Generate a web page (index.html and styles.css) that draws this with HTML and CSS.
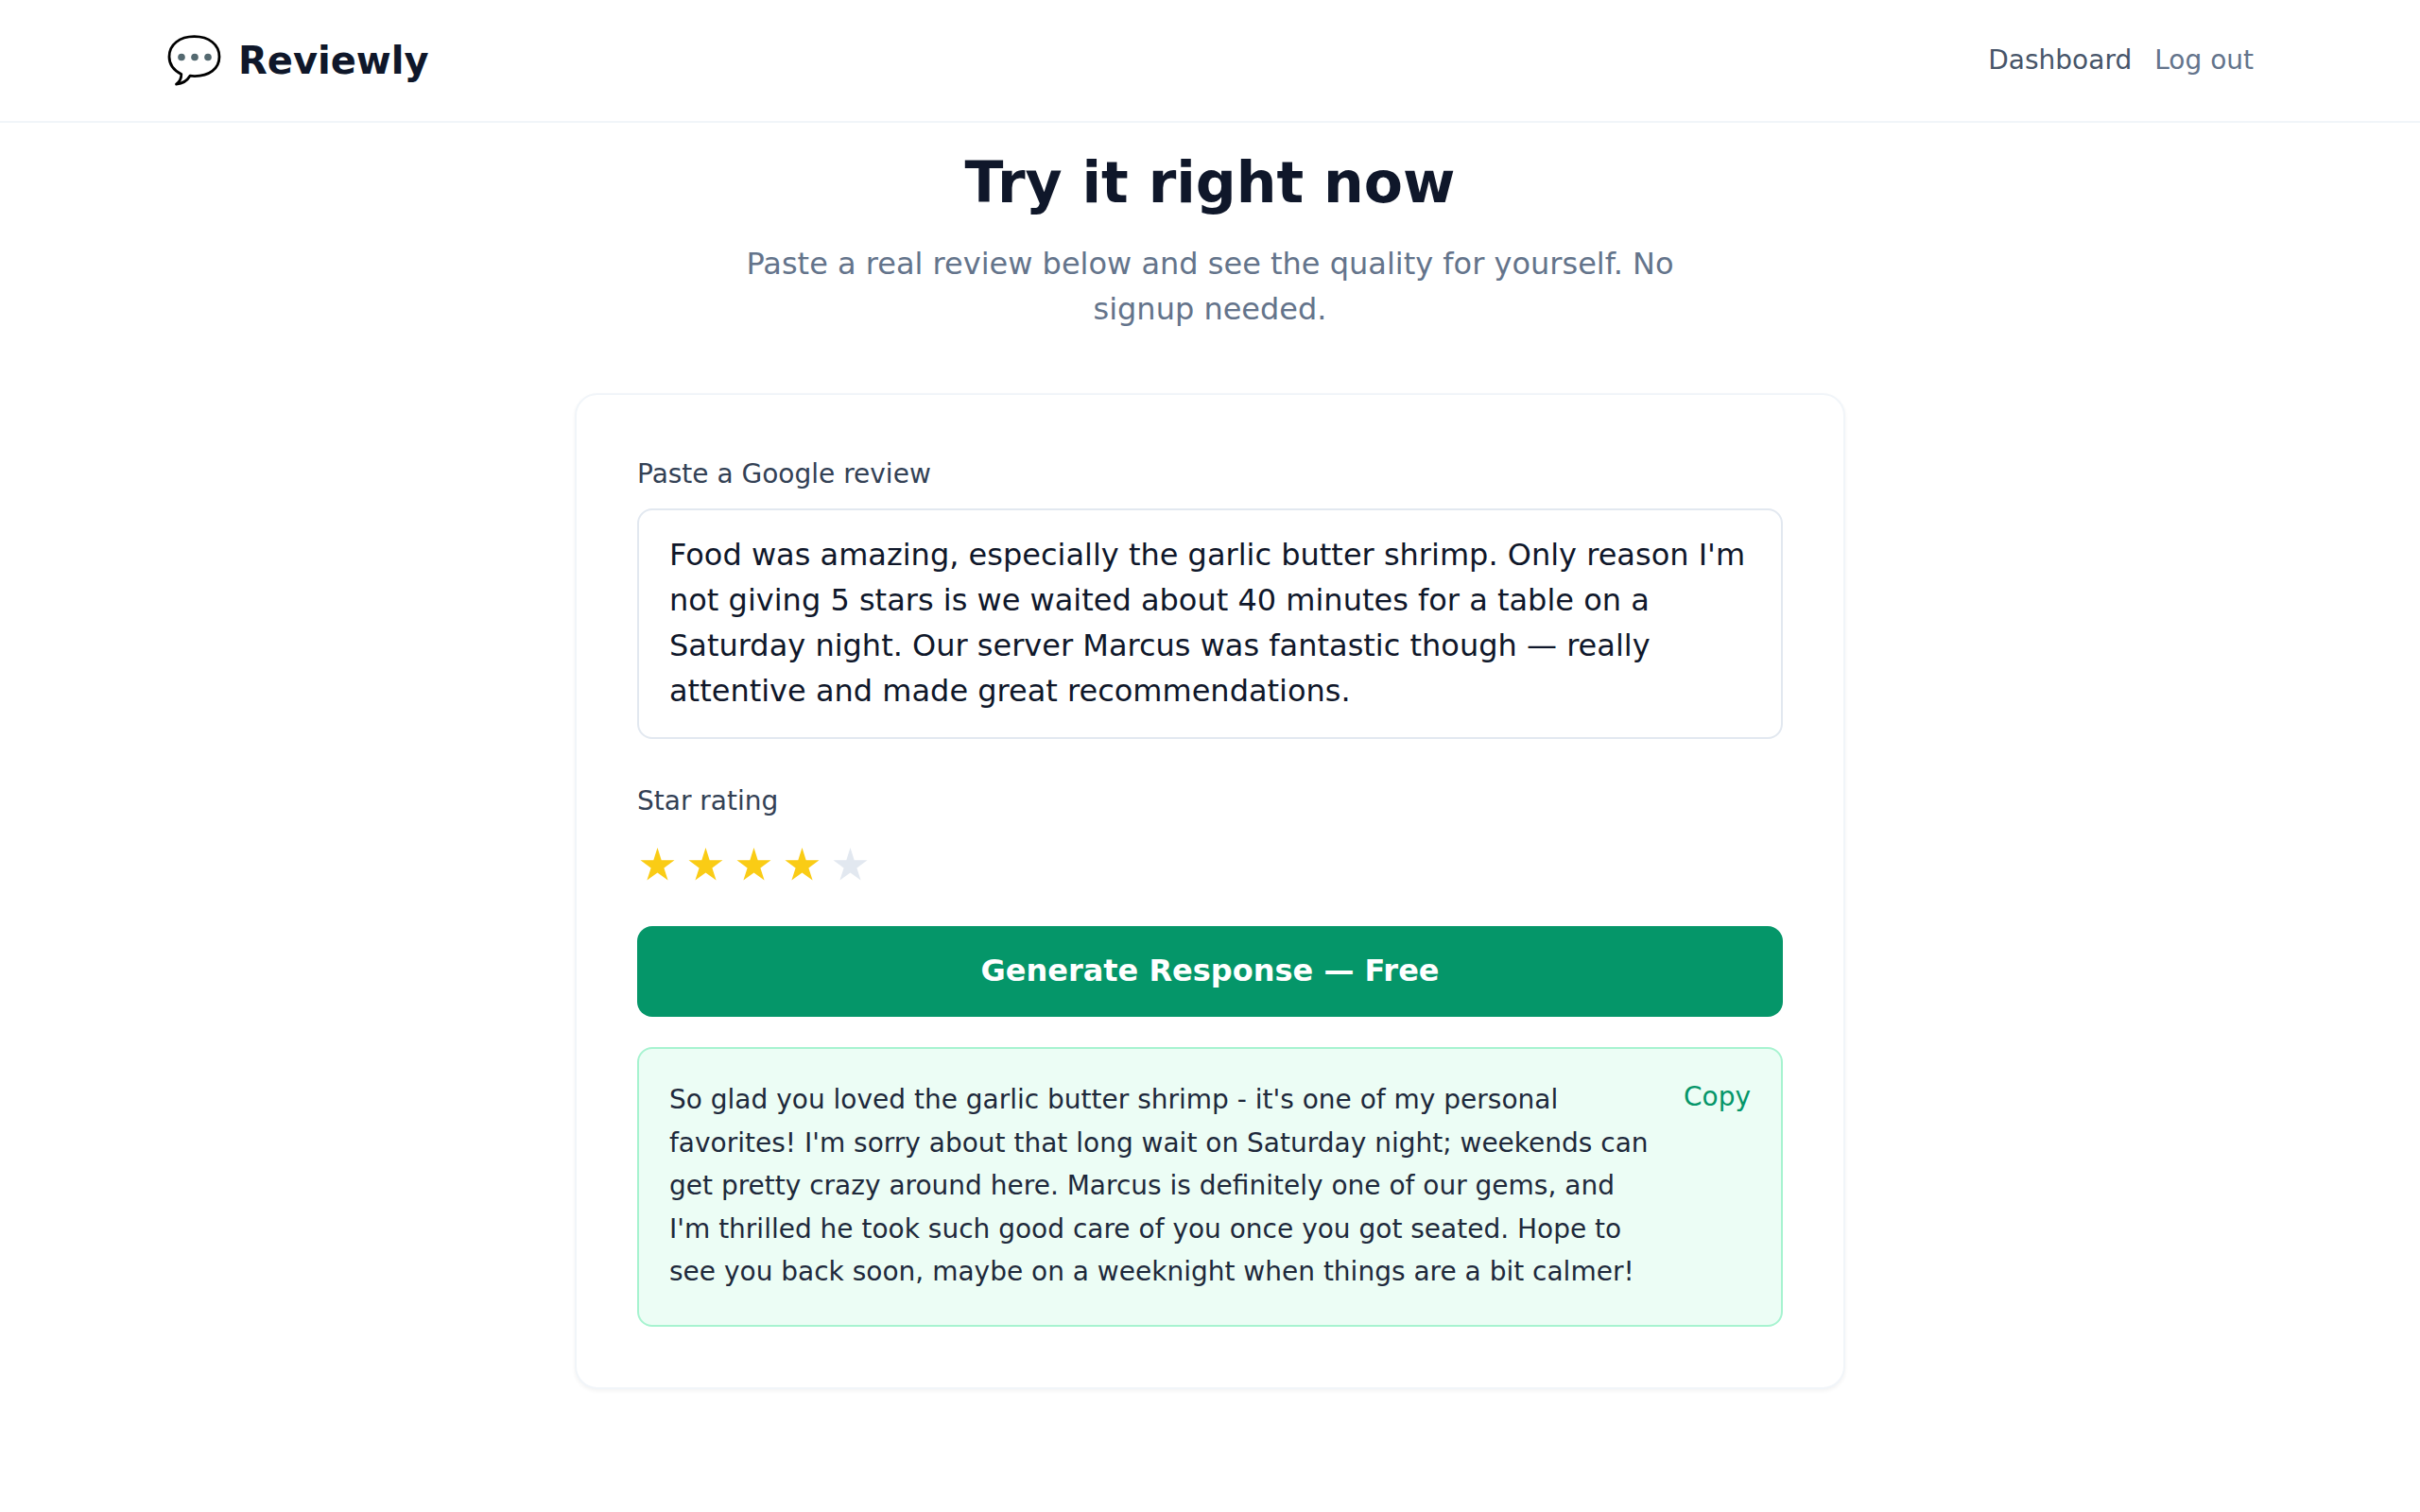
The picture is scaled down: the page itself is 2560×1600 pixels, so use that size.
FILE: index.html
```
<!DOCTYPE html>
<html lang="en">
  <head>
    <meta charset="UTF-8" />
    <meta name="viewport" content="width=device-width, initial-scale=1.0" />
    <title>Reviewly</title>
    <link rel="stylesheet" href="styles.css">
  </head>
  <body>
    <header class="header">
      <div class="header-inner">
        <a href="#" class="logo">
          <svg class="logo-icon" viewBox="0 0 60 64" aria-hidden="true">
            <path d="M29.500 6.700C45 6.700 56 15 56 28C56 41 45 48.600 30 48.600Q27 48.600 25 48.200Q20.500 56 10.500 57.200Q16 53 15.800 46.500C8 42.500 3 37 3 28C3 15 14 6.700 29.500 6.700Z" fill="#fff" stroke="#000" stroke-width="2.800" stroke-linejoin="round" />
            <circle cx="16" cy="28.500" r="3.800" fill="#546970" />
            <circle cx="30" cy="28.500" r="3.800" fill="#546970" />
            <circle cx="44" cy="28.500" r="3.800" fill="#546970" />
          </svg>
          <span>Reviewly</span>
        </a>
        <nav class="nav">
          <a href="#" class="nav-link">Dashboard</a>
          <button type="button" class="logout">Log out</button>
        </nav>
      </div>
    </header>

    <main class="demo">
      <h2>Try it right now</h2>
      <p class="subtitle">Paste a real review below and see the quality for yourself. No signup needed.</p>

      <form id="demoForm" class="card">
        <label for="review">Paste a Google review</label>
        <textarea id="review" rows="4" spellcheck="false">Food was amazing, especially the garlic butter shrimp. Only reason I'm not giving 5 stars is we waited about 40 minutes for a table on a Saturday night. Our server Marcus was fantastic though — really attentive and made great recommendations.</textarea>

        <span class="label" id="ratingLabel">Star rating</span>
        <div class="stars" role="group" aria-labelledby="ratingLabel">
          <button type="button" class="star on" aria-label="1 star">
            <svg viewBox="0 0 43 64"><path d="M21.500 13L25.700 26.200H39.500L28.400 34.400L32.600 47.600L21.500 39.500L10.400 47.600L14.600 34.400L3.500 26.200H17.300Z" /></svg>
          </button>
          <button type="button" class="star on" aria-label="2 stars">
            <svg viewBox="0 0 43 64"><path d="M21.500 13L25.700 26.200H39.500L28.400 34.400L32.600 47.600L21.500 39.500L10.400 47.600L14.600 34.400L3.500 26.200H17.300Z" /></svg>
          </button>
          <button type="button" class="star on" aria-label="3 stars">
            <svg viewBox="0 0 43 64"><path d="M21.500 13L25.700 26.200H39.500L28.400 34.400L32.600 47.600L21.500 39.500L10.400 47.600L14.600 34.400L3.500 26.200H17.300Z" /></svg>
          </button>
          <button type="button" class="star on" aria-label="4 stars">
            <svg viewBox="0 0 43 64"><path d="M21.500 13L25.700 26.200H39.500L28.400 34.400L32.600 47.600L21.500 39.500L10.400 47.600L14.600 34.400L3.500 26.200H17.300Z" /></svg>
          </button>
          <button type="button" class="star" aria-label="5 stars">
            <svg viewBox="0 0 43 64"><path d="M21.500 13L25.700 26.200H39.500L28.400 34.400L32.600 47.600L21.500 39.500L10.400 47.600L14.600 34.400L3.500 26.200H17.300Z" /></svg>
          </button>
        </div>

        <button type="submit" class="generate">Generate Response — Free</button>

        <div class="response">
          <p id="responseText">So glad you loved the garlic butter shrimp - it's one of my personal favorites! I'm sorry about that long wait on Saturday night; weekends can get pretty crazy around here. Marcus is definitely one of our gems, and I'm thrilled he took such good care of you once you got seated. Hope to see you back soon, maybe on a weeknight when things are a bit calmer!</p>
          <button type="button" id="copyBtn" class="copy">Copy</button>
        </div>
      </form>
    </main>

    <script>
      const stars = document.querySelectorAll(".star");

      stars.forEach(function (star, index) {
        star.addEventListener("click", function () {
          stars.forEach((s, i) => s.classList.toggle("on", i <= index));
        });
      });

      document
        .getElementById("demoForm")
        .addEventListener("submit", function (event) {
          event.preventDefault();
        });

      document.getElementById("copyBtn").addEventListener("click", function () {
        const text = document.getElementById("responseText").textContent;
        navigator.clipboard.writeText(text);
      });
    </script>
  </body>
</html>
```
FILE: styles.css
```
* {
  box-sizing: border-box;
}

body {
  margin: 0;
  background-color: #fff;
  color: #0f172a;
  font-family: "DejaVu Sans", sans-serif;
  font-size: 32px;
  line-height: 48px;
}

button {
  padding: 0;
  border: none;
  background: none;
  font-family: inherit;
  cursor: pointer;
}

.header {
  background-color: #fff;
  border-bottom: 2px solid #f1f5f9;
}

.header-inner {
  display: flex;
  align-items: center;
  justify-content: space-between;
  max-width: 2304px;
  margin: 0 auto;
  padding: 32px 48px;
}

.logo {
  display: flex;
  align-items: center;
  gap: 16px;
  color: #0f172a;
  font-size: 40px;
  font-weight: bold;
  line-height: 56px;
  text-decoration: none;
}

.logo-icon {
  width: 60px;
  height: 64px;
}

.nav {
  display: flex;
  align-items: center;
  gap: 24px;
}

.nav-link,
.logout {
  color: #475569;
  font-size: 28px;
  line-height: 38px;
  text-decoration: none;
}

.logout {
  color: #64748b;
}

.demo {
  max-width: 1344px;
  margin: 0 auto;
  padding: 27px 0 96px;
}

h2 {
  margin: 0 0 26px;
  font-size: 60px;
  line-height: 72px;
  text-align: center;
}

.subtitle {
  max-width: 1024px;
  margin: 0 auto 65px;
  color: #64748b;
  text-align: center;
}

.card {
  padding: 64px;
  background-color: #fff;
  border: 2px solid #f1f5f9;
  border-radius: 24px;
  box-shadow: 0 2px 4px rgba(0, 0, 0, 0.05);
}

label,
.label {
  display: block;
  margin-bottom: 16px;
  color: #334155;
  font-size: 28px;
  line-height: 40px;
}

textarea {
  display: block;
  width: 100%;
  margin-bottom: 46px;
  padding: 23px 32px 25px;
  border: 2px solid #e2e8f0;
  border-radius: 16px;
  color: #0f172a;
  font: inherit;
  resize: none;
  overflow: hidden;
}

.stars {
  display: flex;
  gap: 8px;
  margin-bottom: 32px;
}

.star {
  color: #e2e8f0;
}

.star.on {
  color: #facc15;
}

.star svg {
  display: block;
  width: 43px;
  height: 64px;
  fill: currentColor;
}

.generate {
  width: 100%;
  padding: 23px 24px 25px;
  border-radius: 16px;
  background-color: #059669;
  color: #fff;
  font-size: 32px;
  font-weight: bold;
  line-height: 48px;
}

.generate:hover {
  background-color: #047857;
}

.response {
  display: flex;
  align-items: flex-start;
  justify-content: space-between;
  gap: 32px;
  margin-top: 32px;
  padding: 31px 32px 33px;
  background-color: #ecfdf5;
  border: 2px solid #a7f3d0;
  border-radius: 16px;
}

.response p {
  margin: 0;
  color: #1e293b;
  font-size: 28px;
  line-height: 1.625;
}

.copy {
  color: #059669;
  font-size: 28px;
  line-height: 40px;
}
```
